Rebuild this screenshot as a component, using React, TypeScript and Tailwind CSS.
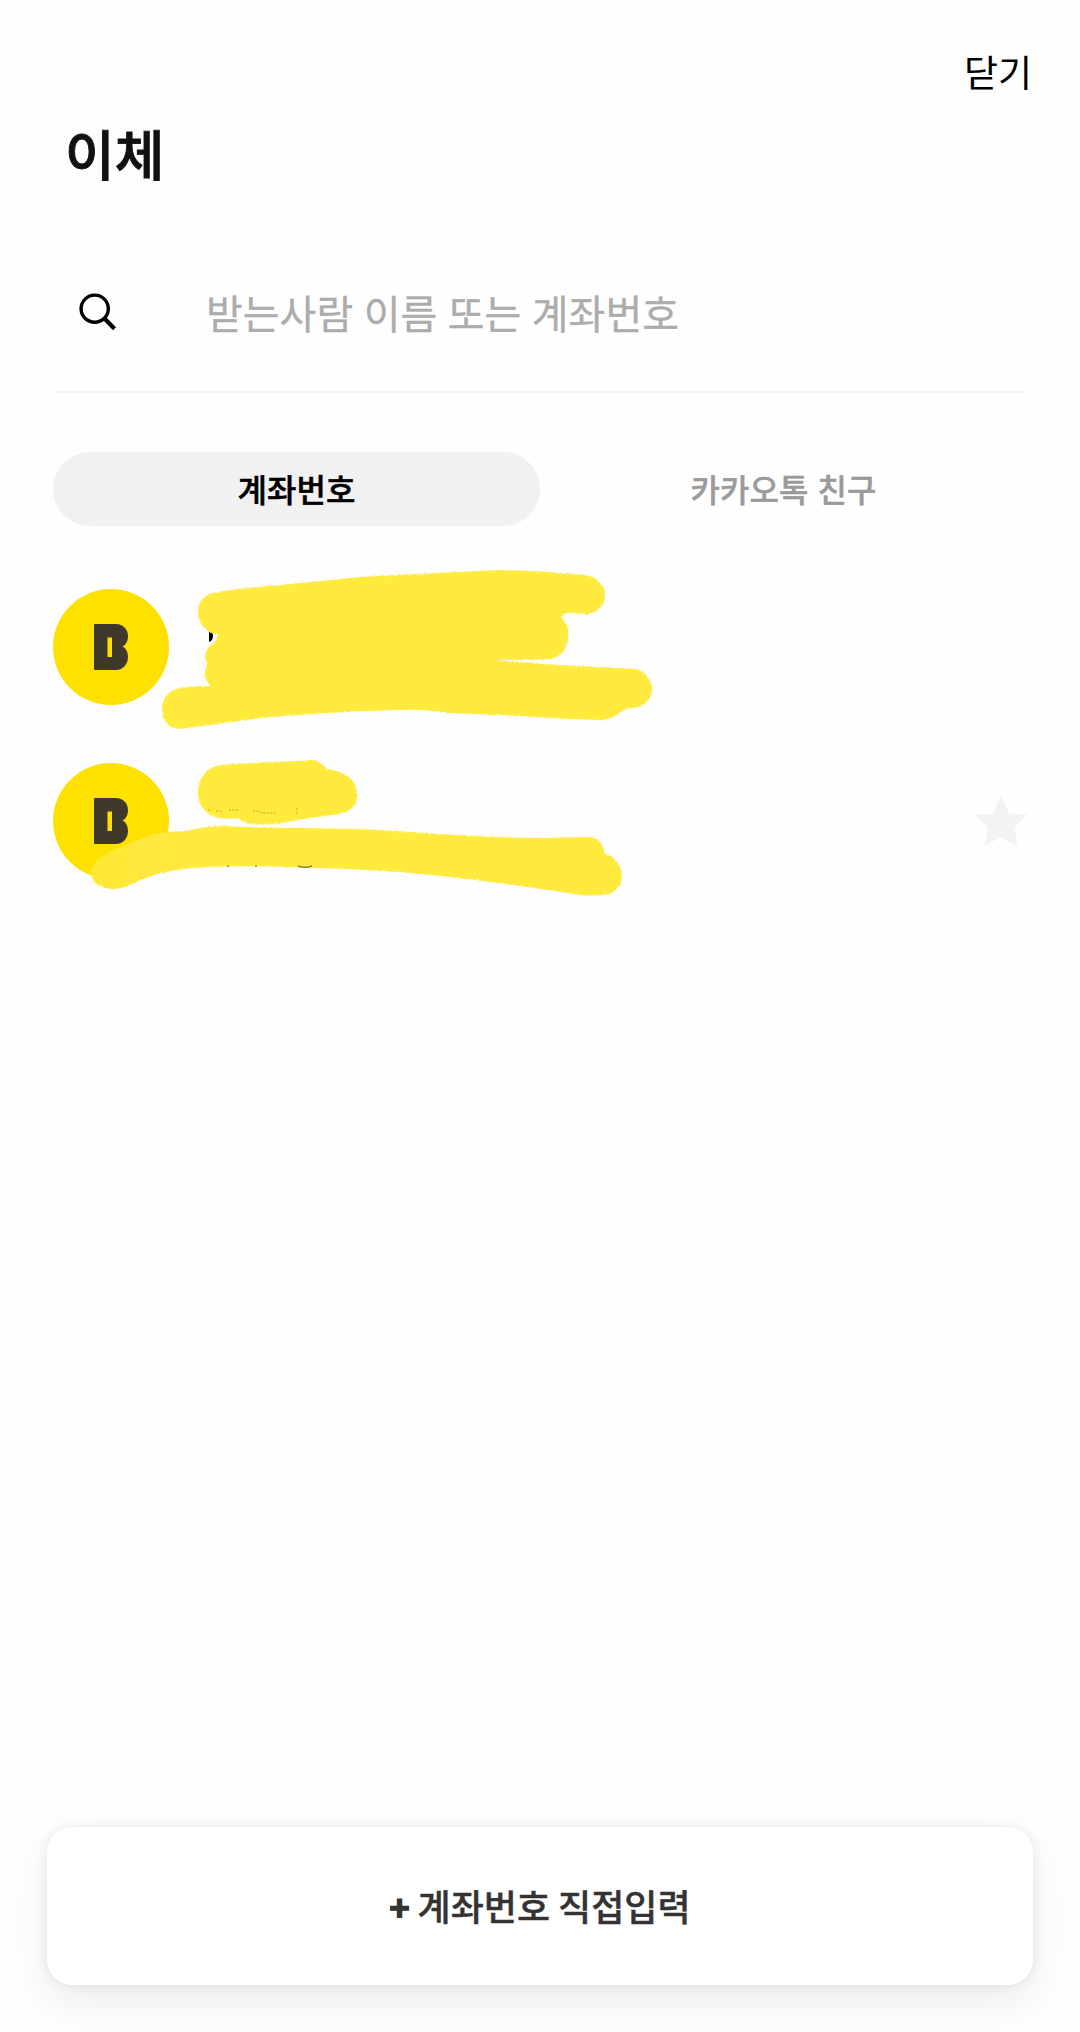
import type { ReactNode } from 'react';

interface TabProps {
  label: string;
  active?: boolean;
}

interface AccountRowProps {
  favorite?: boolean;
  children?: ReactNode;
}

const SearchIcon = () => (
  <svg className="mt-[3px] h-10 w-10" viewBox="0 0 40 40" fill="none" stroke="#000" aria-hidden="true">
    <circle cx="16.7" cy="16.7" r="13.6" strokeWidth="3.4" />
    <path d="M25.8 25.8L36.5 36.7" strokeWidth="4.2" />
  </svg>
);

const StarIcon = () => (
  <svg className="h-[50px] w-[52px]" viewBox="0 0 52 50" fill="#f3f3f3" stroke="#f3f3f3" strokeWidth="2" strokeLinejoin="round" aria-hidden="true">
    <path d="M26 2L34 19H50L38 31.500L41.400 48L26 40L10.600 48L14.300 31.500L2 19H18.500Z" />
  </svg>
);

const BankLogo = () => (
  <div className="flex h-[116px] w-[116px] shrink-0 items-center justify-center rounded-full bg-[#ffe100]">
    <svg className="h-[46px] w-[34px]" viewBox="0 0 34 46" fill="#3f392c" fillRule="evenodd" aria-hidden="true">
      <path d="M1 0H22C29 0 34 5 34 12C34 17 32 21 28.500 22.500C32 24 34 28 34 33C34 40 29 46 22 46H1Q0 46 0 45V1Q0 0 1 0ZM13.500 13.500V33H18V13.500Z" />
    </svg>
  </div>
);

const Tab = ({ label, active }: TabProps) => (
  <button
    type="button"
    className={`h-[74px] flex-1 rounded-full pb-[3px] text-[32px] leading-none font-medium [word-spacing:2px] ${active ? 'bg-[#f1f1f1] text-black [-webkit-text-stroke:0.5px_#000]' : 'text-[#9a9a9a] [-webkit-text-stroke:0.4px_#9a9a9a]'}`}
  >
    {label}
  </button>
);

const AccountRow = ({ favorite, children }: AccountRowProps) => (
  <li className="relative flex h-[116px] items-center justify-between">
    <BankLogo />
    {favorite && <StarIcon />}
    {children}
  </li>
);

// marker strokes drawn over the private account details
const MarkerOne = () => (
  <svg className="absolute -top-[29px] left-0 h-[180px] w-[640px]" viewBox="53 560 640 180" aria-hidden="true">
    <path d="M209 629Q213 632 213 636Q213 641 209 642Z" fill="#000" />
    <path
      fill="#ffea3c"
      filter="url(#rough)"
      d="M198 612C198 600 206 593 218 592Q250 587 280 585L360 577Q430 573 500 570Q545 571 585 575C597 577 605 585 605 595C605 606 596 614 585 614Q575 612 567 613Q560 616 563 620C568 625 569 630 568 639C567 650 559 658 550 659Q520 660 498 660Q515 662 560 665L635 669C645 671 652 680 652 689C652 700 643 708 632 708Q626 708 622 711Q612 720 600 720Q560 719 520 716L450 713Q420 709 400 710Q340 711 260 718L180 729C169 729 162 720 162 709C162 698 169 690 180 688Q195 686 211 686Q205 681 205 674Q205 668 207 664Q204 658 206 652Q208 646 216 641L218 634Q211 634 207 630Q198 623 198 612Z"
    />
  </svg>
);

const MarkerTwo = () => (
  <svg className="absolute -top-[13px] left-0 h-[160px] w-[640px]" viewBox="53 750 640 160" aria-hidden="true">
    <linearGradient id="fade" gradientUnits="userSpaceOnUse" x1="90" y1="0" x2="205" y2="0">
      <stop offset="0" stopColor="#ffe734" />
      <stop offset="0.6" stopColor="#ffe93f" />
      <stop offset="1" stopColor="#ffea3c" />
    </linearGradient>
    <g fill="#ffea3c" filter="url(#rough)">
      <path d="M198 793C198 778 208 766 221 765Q250 763 312 760Q321 761 327 769Q342 771 350 778C357 785 359 797 355 804C350 812 341 814 332 815Q300 819 277 824Q256 825 247 823Q242 821 238 818Q225 820 215 817C204 813 198 804 198 793Z" />
      <path
        fill="url(#fade)"
        d="M91 874C91 864 101 856 110 852Q127 844 148 836Q165 831 186 831Q198 828 207 827Q220 825 240 827L360 829Q400 831 440 834Q500 838 545 838L590 837Q598 837 602 845L605 854C614 856 622 865 622 876C622 886 614 895 603 895Q589 896 580 895Q550 890 520 886Q480 880 440 876Q395 871 350 869L250 866L208 867Q170 868 140 880Q125 889 112 889C100 888 91 882 91 874Z"
      />
    </g>
    <path d="M208 810H212M216 811H223M229 810H239M253 811H258L262 813H276M297 808V814" fill="none" stroke="#a99d2c" strokeWidth="0.8" strokeDasharray="2 1.5" />
    <path d="M228 865V867M256 865V867M298 866Q305 868.500 312 866" fill="none" stroke="#8d8636" strokeWidth="1.400" />
  </svg>
);

const App = () => {
  return (
    <main className="flex h-[2032px] w-[1080px] flex-col bg-[#fefefe] font-['Noto_Sans_CJK_KR',sans-serif]">
      <svg className="absolute h-0 w-0" aria-hidden="true">
        <filter id="rough" x="-5%" y="-5%" width="110%" height="110%">
          <feTurbulence type="fractalNoise" baseFrequency="0.9" numOctaves="2" result="noise" />
          <feDisplacementMap in="SourceGraphic" in2="noise" scale="3" xChannelSelector="R" yChannelSelector="G" />
          <feGaussianBlur stdDeviation="0.7" />
        </filter>
      </svg>

      <header className="pt-[51px]">
        <div className="flex justify-end pr-[48px]">
          <button type="button" className="h-10 text-[37px] leading-10 text-black">닫기</button>
        </div>
        <h1 className="mt-[30px] ml-[65px] h-16 text-[54px] leading-[64px] font-medium text-[#111] [-webkit-text-stroke:0.9px_#111]">이체</h1>
      </header>

      <section className="mt-[66px] ml-[52px] flex h-[142px] w-[976px] items-center border-b-2 border-[#f4f4f4] pb-[22px] pl-[26px]">
        <SearchIcon />
        <span className="mt-[3px] ml-[88px] text-[40px] leading-[60px] text-[#acacac] [-webkit-text-stroke:0.3px_#acacac] [word-spacing:1.5px]">
          받는사람 이름 또는 계좌번호
        </span>
      </section>

      <nav className="mt-[59px] ml-[53px] flex w-[974px]">
        <Tab label="계좌번호" active />
        <Tab label="카카오톡 친구" />
      </nav>

      <ul className="mt-[63px] ml-[53px] flex w-[974px] flex-col gap-[58px]">
        <AccountRow>
          <MarkerOne />
        </AccountRow>
        <AccountRow favorite>
          <MarkerTwo />
        </AccountRow>
      </ul>

      <button
        type="button"
        className="mx-[47px] mt-auto mb-[47px] h-[158px] rounded-[25px] bg-white pb-0.5 text-[36px] leading-none font-medium text-[#333] shadow-[0_0_12px_rgba(0,0,0,0.08),0_18px_44px_rgba(0,0,0,0.07)] [-webkit-text-stroke:0.4px_#333]"
      >
        <span className="text-[34px] font-bold [-webkit-text-stroke:1.6px_#333]">+</span> 계좌번호 직접입력
      </button>
    </main>
  );
};

export default App;
